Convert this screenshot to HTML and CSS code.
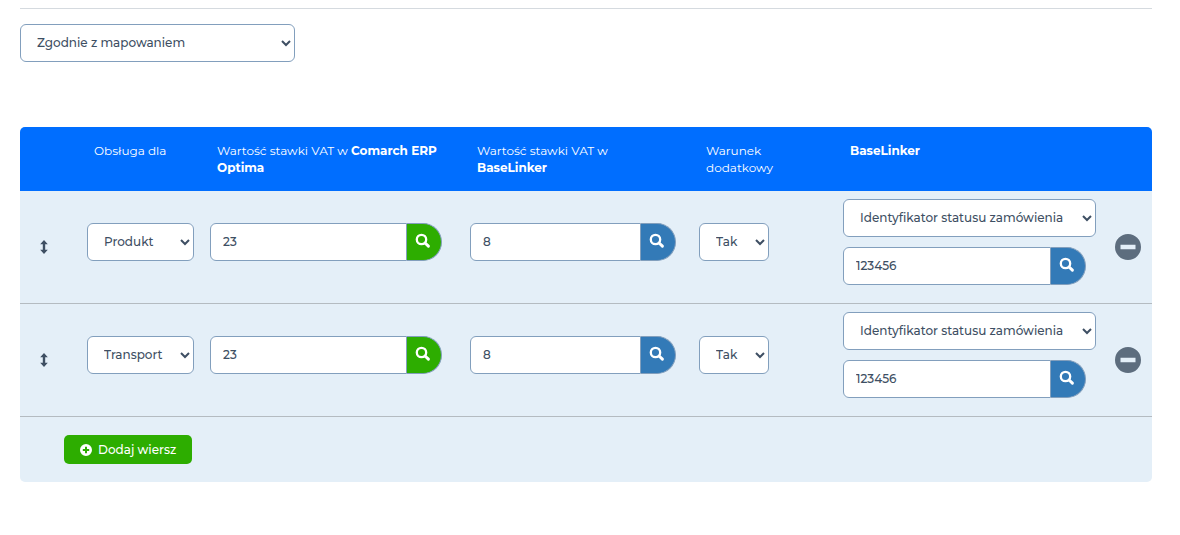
FILE: index.html
```html
<!DOCTYPE html>
<html lang="pl">
<head>
<meta charset="utf-8">
<title>Mapowanie stawek VAT</title>
<link rel="stylesheet" href="styles.css">
</head>
<body>
<svg class="sprite" aria-hidden="true">
  <symbol id="search" viewBox="0 0 16 16"><circle cx="6.500" cy="6.500" r="4.700" fill="none" stroke="currentColor" stroke-width="2.300"/><path d="M10 10l3.400 3.200" stroke="currentColor" stroke-width="3" stroke-linecap="round"/></symbol>
  <symbol id="move" viewBox="0 0 8 14"><path d="M4 0l3.800 4.200H5.200v5.600h2.600L4 14 .2 9.800h2.600V4.200H.2z" fill="currentColor"/></symbol>
  <symbol id="minus" viewBox="0 0 26 26"><path fill-rule="evenodd" d="M13 0a13 13 0 1 0 0 26 13 13 0 0 0 0-26zM5.500 10.800h15v4.400h-15z" fill="currentColor"/></symbol>
  <symbol id="plus" viewBox="0 0 12 12"><path fill-rule="evenodd" d="M6 0a6 6 0 1 0 0 12A6 6 0 0 0 6 0zM5 2.800h2V5h2.200v2H7v2.200H5V7H2.800V5H5z" fill="currentColor"/></symbol>
</svg>
<main class="page">
  <select class="control mode" aria-label="Sposób obsługi"><option>Zgodnie z mapowaniem</option></select>
  <table class="mapping">
    <colgroup>
      <col class="col-move"><col class="col-for"><col class="col-optima"><col class="col-base"><col class="col-cond"><col class="col-status"><col class="col-remove">
    </colgroup>
    <thead>
      <tr>
        <th></th>
        <th>Obsługa dla</th>
        <th>Wartość stawki VAT w <strong>Comarch ERP Optima</strong></th>
        <th>Wartość stawki VAT w <strong>BaseLinker</strong></th>
        <th>Warunek dodatkowy</th>
        <th><strong>BaseLinker</strong></th>
        <th></th>
      </tr>
    </thead>
    <tbody>
      <tr>
        <td class="move"><svg class="icon-move"><use href="#move"/></svg></td>
        <td><select class="control" aria-label="Obsługa dla"><option>Produkt</option></select></td>
        <td><div class="group group-optima"><input class="control" type="text" value="23" aria-label="Stawka VAT w Comarch ERP Optima"><button class="find find-green" type="button" aria-label="Szukaj"><svg class="icon-search"><use href="#search"/></svg></button></div></td>
        <td><div class="group group-base"><input class="control" type="text" value="8" aria-label="Stawka VAT w BaseLinker"><button class="find" type="button" aria-label="Szukaj"><svg class="icon-search"><use href="#search"/></svg></button></div></td>
        <td><select class="control short" aria-label="Warunek dodatkowy"><option>Tak</option></select></td>
        <td><select class="control" aria-label="Pole BaseLinker"><option>Identyfikator statusu zamówienia</option></select><div class="group group-status"><input class="control" type="text" value="123456" aria-label="Identyfikator"><button class="find" type="button" aria-label="Szukaj"><svg class="icon-search"><use href="#search"/></svg></button></div></td>
        <td class="remove-cell"><button class="remove" type="button" aria-label="Usuń wiersz"><svg class="icon-minus"><use href="#minus"/></svg></button></td>
      </tr>
      <tr>
        <td class="move"><svg class="icon-move"><use href="#move"/></svg></td>
        <td><select class="control" aria-label="Obsługa dla"><option>Transport</option></select></td>
        <td><div class="group group-optima"><input class="control" type="text" value="23" aria-label="Stawka VAT w Comarch ERP Optima"><button class="find find-green" type="button" aria-label="Szukaj"><svg class="icon-search"><use href="#search"/></svg></button></div></td>
        <td><div class="group group-base"><input class="control" type="text" value="8" aria-label="Stawka VAT w BaseLinker"><button class="find" type="button" aria-label="Szukaj"><svg class="icon-search"><use href="#search"/></svg></button></div></td>
        <td><select class="control short" aria-label="Warunek dodatkowy"><option>Tak</option></select></td>
        <td><select class="control" aria-label="Pole BaseLinker"><option>Identyfikator statusu zamówienia</option></select><div class="group group-status"><input class="control" type="text" value="123456" aria-label="Identyfikator"><button class="find" type="button" aria-label="Szukaj"><svg class="icon-search"><use href="#search"/></svg></button></div></td>
        <td class="remove-cell"><button class="remove" type="button" aria-label="Usuń wiersz"><svg class="icon-minus"><use href="#minus"/></svg></button></td>
      </tr>
    </tbody>
    <tfoot>
      <tr><td colspan="7"><button class="add" type="button"><svg class="icon-plus"><use href="#plus"/></svg>Dodaj wiersz</button></td></tr>
    </tfoot>
  </table>
</main>
</body>
</html>
```
FILE: styles.css
```css
* { box-sizing: border-box; }
body {
  margin: 0;
  background: #fff;
  color: #3e4f63;
  font: 500 12px/17px Montserrat, Inter, sans-serif;
}
button, input, select { font: inherit; color: inherit; }
svg { display: block; }
.sprite { display: none; }
.page {
  margin: 8px 28px 0 20px;
  padding-top: 15px;
  border-top: 1px solid #d5dadf;
}
.control {
  display: block;
  width: 100%;
  min-width: 0;
  height: 38px;
  margin: 0 0 10px;
  padding: 0 12px 2px;
  border: 1px solid #829fbd;
  border-radius: 6px;
  background-color: #fff;
}
.mode { width: 275px; margin-bottom: 65px; }
.short { width: 70px; }

.mapping {
  width: 100%;
  table-layout: fixed;
  border-collapse: separate;
  border-spacing: 0;
  border-radius: 5px;
  overflow: hidden;
  background: #e4eff8;
}
.col-move { width: 59px; }
.col-for { width: 123px; }
.col-optima { width: 23%; }
.col-base { width: 229px; }
.col-cond { width: 144px; }
.col-status { width: 269px; }
.col-remove { width: 48px; }

th {
  padding: 15px;
  background: #006eff;
  color: #fff;
  font-weight: 400;
  text-align: left;
  vertical-align: top;
}
th strong { font-weight: 700; }
td { padding: 8px; vertical-align: middle; }
tbody td { border-bottom: 1px solid #b4bbc1; }

.group { display: flex; margin-bottom: 10px; }
.group .control {
  flex: 1;
  margin: 0;
  border-radius: 6px 0 0 6px;
}
.group-optima { margin-right: 12px; }
.group-base { margin-right: 7px; }
.group-status { margin-right: 10px; }
.find {
  display: flex;
  align-items: center;
  width: 35px;
  padding: 0 0 2px 8px;
  border: 1px solid #829fbd;
  border-left: 0;
  border-radius: 0 19px 19px 0;
  background: #337ab7;
  color: #fff;
}
.find-green { background: #2dad00; }
.icon-search { width: 16px; height: 16px; }
.icon-move { width: 8px; height: 14px; margin-left: 12px; }
.icon-minus { width: 26px; height: 26px; }
.icon-plus { width: 12px; height: 12px; }
.remove-cell { padding-left: 11px; padding-right: 0; }
.remove {
  display: block;
  padding: 0;
  border: 0;
  background: none;
  color: #5d6d7e;
}
tfoot td { padding: 18px 44px; }
.add {
  display: flex;
  align-items: center;
  gap: 6px;
  height: 29px;
  padding: 0 16px;
  border: 0;
  border-radius: 5px;
  background: #2dad00;
  color: #fff;
  font-weight: 500;
}
```
